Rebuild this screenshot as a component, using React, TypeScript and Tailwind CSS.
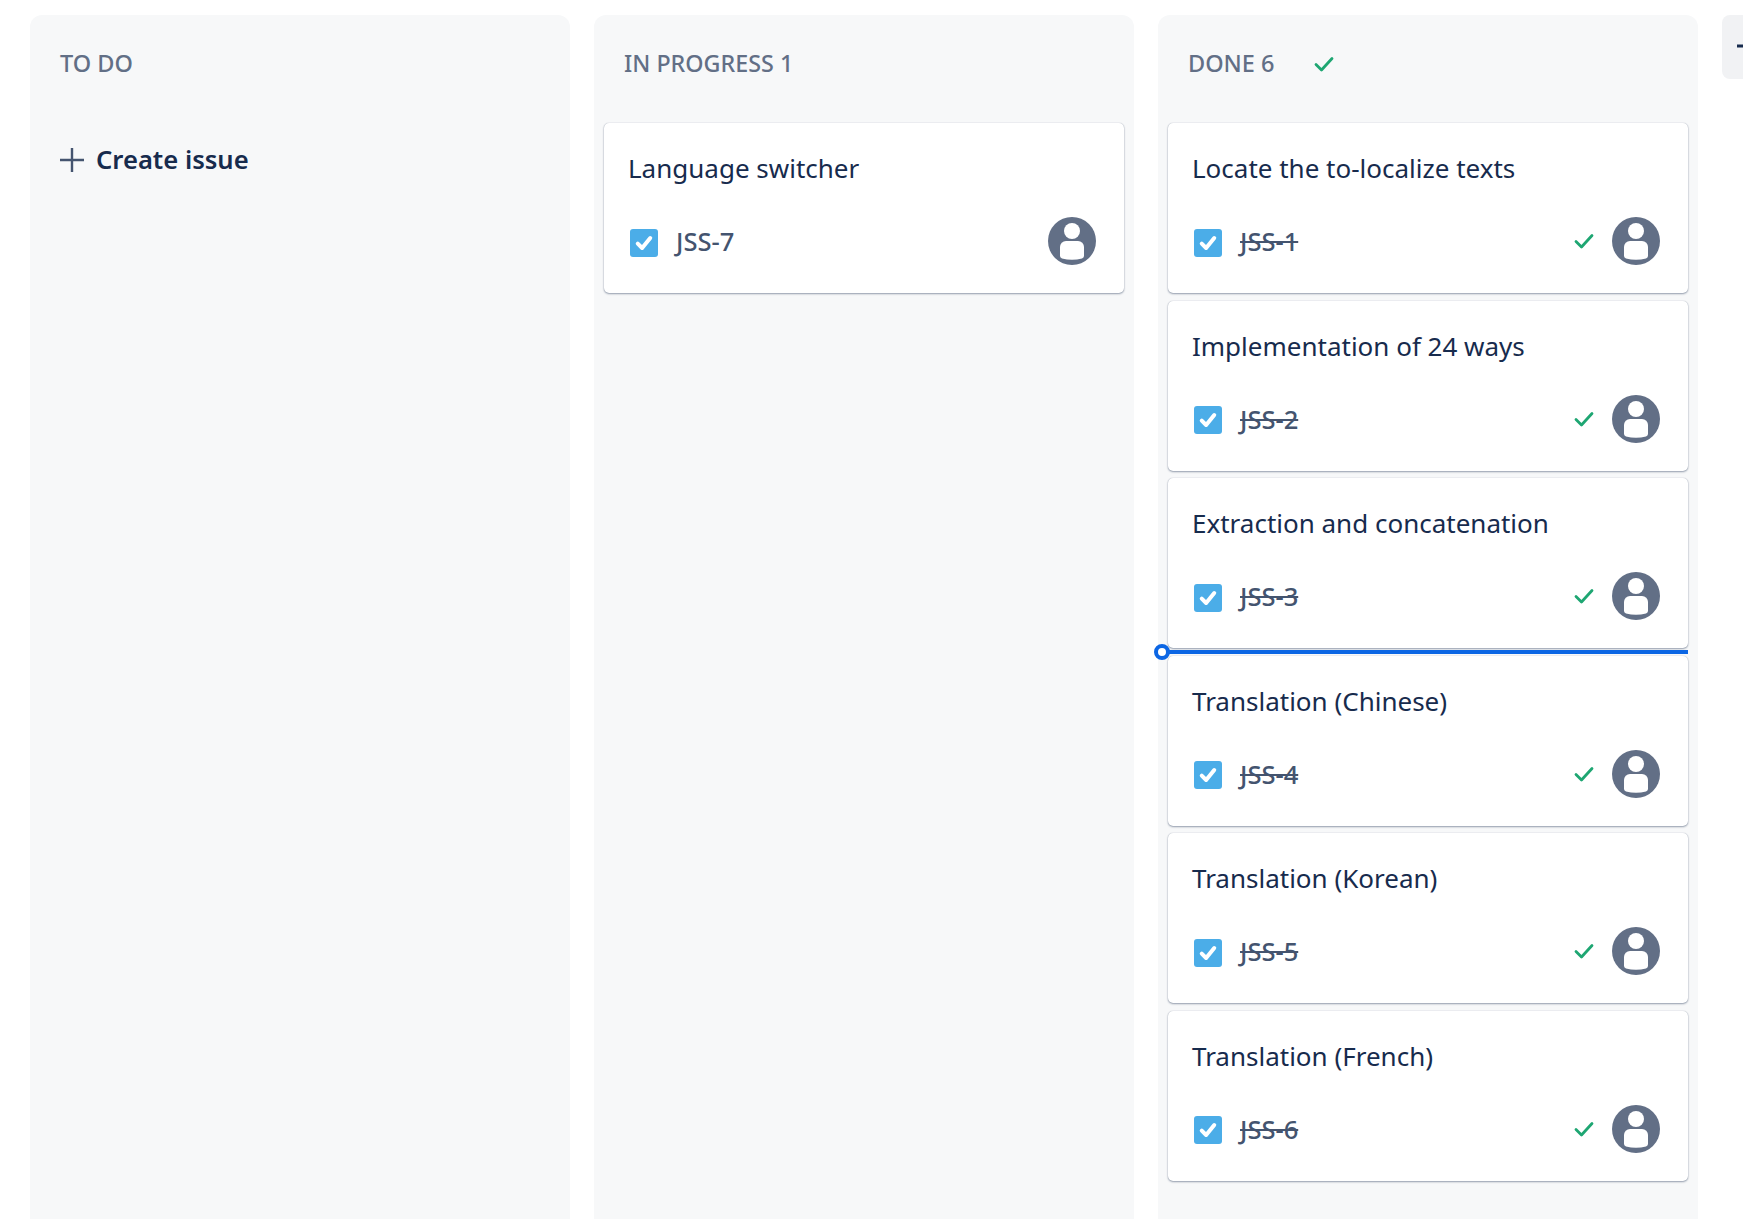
const DONE = [
  { title: 'Locate the to-localize texts', key: 'JSS-1' },
  { title: 'Implementation of 24 ways', key: 'JSS-2' },
  { title: 'Extraction and concatenation', key: 'JSS-3' },
  { title: 'Translation (Chinese)', key: 'JSS-4' },
  { title: 'Translation (Korean)', key: 'JSS-5' },
  { title: 'Translation (French)', key: 'JSS-6' },
];

function GreenCheck({ className }: { className: string }) {
  return (
    <svg viewBox="0 0 20 16" className={className} fill="none">
      <path d="M2 8.5 L7.5 14 L18 2.5" stroke="#1ea672" strokeWidth="2.8" strokeLinecap="round" strokeLinejoin="round" />
    </svg>
  );
}

function TaskIcon() {
  return (
    <div className="mt-[3px] ml-[2px] flex h-7 w-7 shrink-0 items-center justify-center rounded-[3px] bg-[#4bade8]">
      <svg viewBox="0 0 16 16" className="h-5 w-5" fill="none">
        <path d="M3 8.5 L6.5 12 L13 4" stroke="#fff" strokeWidth="3.2" strokeLinecap="round" strokeLinejoin="round" />
      </svg>
    </div>
  );
}

function Avatar() {
  return (
    <svg viewBox="0 0 48 48" className="h-12 w-12 shrink-0">
      <circle cx="24" cy="24" r="24" fill="#626f86" />
      <circle cx="24" cy="14" r="8" fill="#fff" />
      <path d="M12 30 a6 6 0 0 1 6 -6 h12 a6 6 0 0 1 6 6 v9 a3 3 0 0 1 -2 2.6 q-10 2.4 -20 0 a3 3 0 0 1 -2 -2.6 z" fill="#fff" />
    </svg>
  );
}

function Card({ title, issueKey, done }: { title: string; issueKey: string; done?: boolean }) {
  return (
    <div className="h-[170px] rounded-[5px] bg-white pl-[24px] pr-[28px] pt-[27px] shadow-[0_1px_2px_rgba(9,30,66,0.4),0_0_1px_rgba(9,30,66,0.3)]">
      <div className="text-[26px] leading-[36px] text-[#172b4d]">{title}</div>
      <div className="mt-[31px] flex items-center">
        <TaskIcon />
        <span className={`ml-[18px] text-[25.5px] font-medium leading-[32px] text-[#44546f] ${done ? 'line-through' : ''}`}>{issueKey}</span>
        {done && <GreenCheck className="ml-auto mr-[18px] h-4 w-5" />}
        <div className={done ? '' : 'ml-auto'}>
          <Avatar />
        </div>
      </div>
    </div>
  );
}

export default function App() {
  return (
    <div className="flex h-[1219px] gap-6 overflow-hidden bg-white pl-[30px] pt-[15px] font-['Noto_Sans','Open_Sans',sans-serif]">
      <div className="w-[540px] shrink-0 rounded-t-[12px] bg-[#f7f8f9]">
        <div className="px-[30px] pt-[31px] text-[23.5px] font-medium leading-[34px] text-[#626f86]">TO DO</div>
        <div className="mt-[61px] flex items-center gap-[12px] px-[30px] text-[#172b4d]">
          <svg viewBox="0 0 24 24" className="h-6 w-6" fill="none">
            <path d="M12 0 V24 M0 12 H24" stroke="#44546f" strokeWidth="2.4" strokeLinecap="round" />
          </svg>
          <span className="text-[25.6px] font-semibold leading-[38px]">Create issue</span>
        </div>
      </div>

      <div className="w-[540px] shrink-0 rounded-t-[12px] bg-[#f7f8f9]">
        <div className="px-[30px] pt-[31px] text-[23.3px] font-medium leading-[34px] text-[#626f86]">IN PROGRESS 1</div>
        <div className="mt-[43px] px-[10px]">
          <Card title="Language switcher" issueKey="JSS-7" />
        </div>
      </div>

      <div className="relative w-[540px] shrink-0 rounded-t-[12px] bg-[#f7f8f9]">
        <div className="flex items-center gap-[40px] px-[30px] pt-[31px] text-[23.5px] font-medium leading-[34px] text-[#626f86]">
          DONE 6
          <GreenCheck className="mt-[2px] h-4 w-5" />
        </div>
        <div className="mt-[43px] flex flex-col gap-[7.55px] px-[10px]">
          {DONE.map((d) => (
            <Card key={d.key} title={d.title} issueKey={d.key} done />
          ))}
        </div>
        <div className="absolute left-[8px] right-[10px] top-[635px] h-[4px] bg-[#0c66e4]" />
        <div className="absolute left-[-4px] top-[629px] h-4 w-4 rounded-full border-[4px] border-[#0c66e4] bg-white" />
      </div>

      <div className="relative h-16 w-[64px] shrink-0 rounded-[8px] bg-[#f1f2f4]">
        <svg viewBox="0 0 24 24" className="absolute left-[15px] top-[19px] h-6 w-6" fill="none">
          <path d="M12 0 V24 M0 12 H24" stroke="#172b4d" strokeWidth="3" />
        </svg>
      </div>
    </div>
  );
}
